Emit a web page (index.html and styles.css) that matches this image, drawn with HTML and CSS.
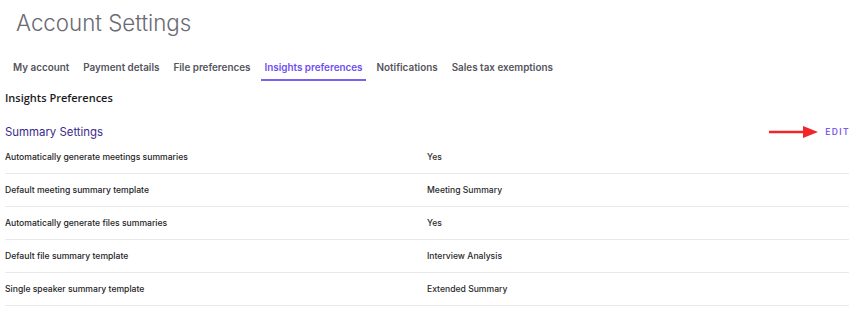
FILE: index.html
```html
<!DOCTYPE html>
<html>
<head>
<meta charset="utf-8">
<link rel="stylesheet" href="styles.css">
</head>
<body>
<div class="page">
  <h1 class="title">Account Settings</h1>
  <nav class="tabs">
    <a class="tab">My account</a>
    <a class="tab">Payment details</a>
    <a class="tab">File preferences</a>
    <a class="tab active">Insights preferences</a>
    <a class="tab">Notifications</a>
    <a class="tab">Sales tax exemptions</a>
  </nav>
  <section class="content">
    <h2 class="section-title">Insights Preferences</h2>
    <div class="sub-head">
      <h3 class="sub-title">Summary Settings</h3>
      <div class="edit-wrap">
        <svg class="arrow" width="50" height="14" viewBox="0 0 50 14">
          <line x1="0" y1="7" x2="36" y2="7" stroke="#f0262b" stroke-width="2.4"/>
          <polygon points="34,1 49,7 34,13" fill="#f0262b"/>
        </svg>
        <span class="edit">EDIT</span>
      </div>
    </div>
    <div class="rows">
      <div class="row"><span class="label">Automatically generate meetings summaries</span><span class="value">Yes</span></div>
      <div class="row"><span class="label">Default meeting summary template</span><span class="value">Meeting Summary</span></div>
      <div class="row"><span class="label">Automatically generate files summaries</span><span class="value">Yes</span></div>
      <div class="row"><span class="label">Default file summary template</span><span class="value">Interview Analysis</span></div>
      <div class="row"><span class="label">Single speaker summary template</span><span class="value">Extended Summary</span></div>
    </div>
  </section>
</div>
</body>
</html>
```

FILE: styles.css
```css
* { box-sizing: border-box; }
html, body { margin: 0; padding: 0; background: #fff; }
body { font-family: Inter, "Liberation Sans", sans-serif; color: #222; }
.page { width: 851px; }
.title {
  margin: 0;
  padding: 10px 0 0 16px;
  font-size: 22.3px;
  font-weight: 300;
  color: #6a6a72;
  line-height: 26px;
}
.tabs {
  display: flex;
  gap: 8px;
  padding: 21px 0 0 10px;
}
.tab {
  padding: 3px 3px 5px;
  font-size: 9.9px;
  font-weight: 600;
  color: #55555d;
  border-bottom: 2px solid transparent;
  line-height: 14px;
}
.tab.active { color: #6e4ff0; border-bottom-color: #7b61f2; }
.content { padding: 8px 0 0 5px; }
.section-title {
  margin: 0;
  font-family: "Open Sans", sans-serif;
  font-size: 11px;
  font-weight: 600;
  color: #1c1c1c;
  line-height: 18px;
}
.sub-head {
  display: flex;
  justify-content: space-between;
  align-items: center;
  margin-top: 17px;
  height: 16px;
  padding-right: 2px;
}
.sub-title {
  margin: 0;
  font-size: 11.4px;
  font-weight: 400;
  color: #3a2a8c;
}
.edit-wrap { display: flex; align-items: center; gap: 6px; }
.arrow { display: block; }
.edit {
  font-size: 8.5px;
  font-weight: 600;
  letter-spacing: 1.4px;
  color: #7b5df0;
  margin-right: -1px;
}
.rows { margin-top: 1px; padding-right: 2px; }
.row {
  display: flex;
  height: 33px;
  align-items: center;
  border-bottom: 1px solid #e9e9e9;
  font-size: 8.6px;
  color: #1e1e1e;
  font-weight: 500;
}
.label { width: 422px; }
.value { color: #2a2a2a; }
```
